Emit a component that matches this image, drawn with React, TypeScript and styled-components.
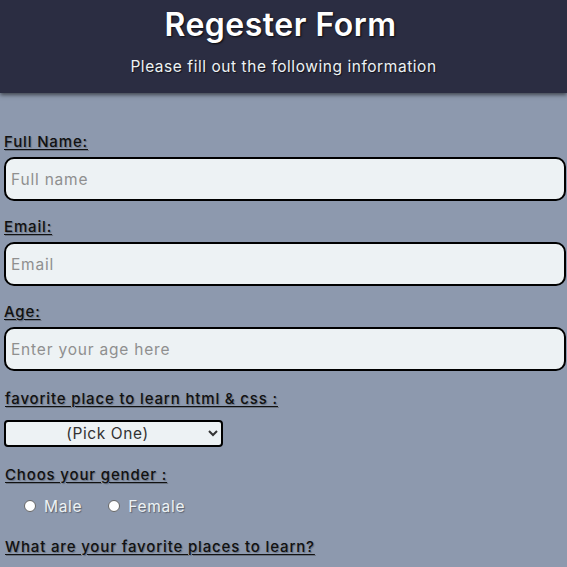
import React from "react";
import styled, { createGlobalStyle } from "styled-components";

const Global = createGlobalStyle`
  html, body { margin: 0; padding: 0; }
  body {
    background: #8d99ae;
    font-family: Inter, "Noto Sans", sans-serif;
    overflow: hidden;
  }
`;

const Header = styled.header`
  background: #2b2d42;
  height: 93px;
  display: flex;
  flex-direction: column;
  align-items: center;
  box-shadow: 0 2px 4px rgba(0, 0, 0, 0.55);
  position: relative;
`;

const Title = styled.h1`
  margin: 5px 0 0;
  font-size: 32px;
  font-weight: 600;
  line-height: 40px;
  color: #ffffff;
  letter-spacing: 0.5px;
  text-indent: -6px;
  text-shadow: 1px 1px 2px rgba(0, 0, 0, 0.8);
`;

const Subtitle = styled.p`
  margin: 12px 0 0;
  font-size: 15.5px;
  line-height: 20px;
  color: #edf2f4;
  letter-spacing: 0.55px;
  text-shadow: 1px 1px 1px rgba(0, 0, 0, 0.6);
`;

const Form = styled.form`
  display: flex;
  flex-direction: column;
  padding: 39px 1px 0 4px;
`;

const Label = styled.label<{ $indent?: number; $gap?: number }>`
  display: block;
  font-size: 15px;
  font-weight: 500;
  line-height: 20px;
  color: #111;
  letter-spacing: 0.85px;
  text-decoration: underline;
  text-underline-offset: 2px;
  padding-left: ${(p) => p.$indent ?? 0}px;
  margin-bottom: ${(p) => p.$gap ?? 5}px;
  text-shadow: 1px 1px 1px rgba(0, 0, 0, 0.25);
`;

const TextInput = styled.input<{ $after?: number }>`
  box-sizing: border-box;
  width: 100%;
  height: 44px;
  margin: 0 0 ${(p) => p.$after ?? 16}px;
  padding: 0 5px;
  border: 2px solid #000;
  border-radius: 10px;
  background: #edf2f4;
  font-family: inherit;
  font-size: 15.5px;
  letter-spacing: 0.8px;
  color: #222;
  outline: none;
  &::placeholder { color: #8f8f8f; }
`;

const Select = styled.select`
  box-sizing: border-box;
  width: 219px;
  height: 27px;
  margin: 0 0 18px;
  border: 2px solid #000;
  border-radius: 4px;
  background: #edf2f4;
  font-family: inherit;
  font-size: 15.5px;
  letter-spacing: 0.6px;
  color: #333;
  text-align: center;
  text-align-last: center;
  outline: none;
`;

const RadioRow = styled.div`
  display: flex;
  align-items: center;
  padding-left: 20px;
  height: 24px;
  margin: 0 0 19px;
`;

const RadioLabel = styled.label`
  display: flex;
  align-items: center;
  margin-right: 26px;
  font-size: 15.5px;
  letter-spacing: 0.7px;
  color: #edf2f4;
  text-shadow: 1px 1px 1px rgba(0, 0, 0, 0.35);
`;

const Radio = styled.input`
  appearance: none;
  width: 12px;
  height: 12px;
  margin: 0 8px 0 0;
  border-radius: 50%;
  background: #fff;
  border: 1px solid #666;
`;

export default function App() {
  return (
    <>
      <Global />
      <Header>
        <Title>Regester Form</Title>
        <Subtitle>Please fill out the following information</Subtitle>
      </Header>
      <Form>
        <Label>Full Name:</Label>
        <TextInput placeholder="Full name" />
        <Label>Email:</Label>
        <TextInput placeholder="Email" />
        <Label>Age:</Label>
        <TextInput placeholder="Enter your age here" $after={18} />
        <Label $indent={1} $gap={11}>favorite place to learn html &amp; css :</Label>
        <Select defaultValue="">
          <option value="">(Pick One)</option>
        </Select>
        <Label $indent={1} $gap={9}>Choos your gender :</Label>
        <RadioRow>
          <RadioLabel>
            <Radio type="radio" name="g" />
            Male
          </RadioLabel>
          <RadioLabel>
            <Radio type="radio" name="g" />
            Female
          </RadioLabel>
        </RadioRow>
        <Label $indent={1}>What are your favorite places to learn?</Label>
      </Form>
    </>
  );
}
